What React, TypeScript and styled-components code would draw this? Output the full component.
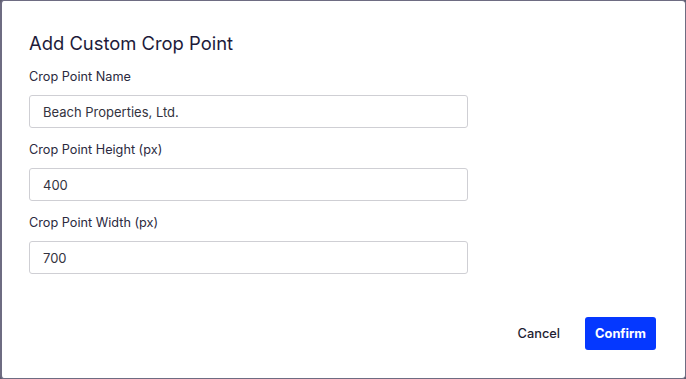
import React from "react";
import styled, { createGlobalStyle } from "styled-components";

const GlobalStyle = createGlobalStyle`
    html, body {
        margin: 0;
        padding: 0;
        background: #5c5b6e;
    }
    * {
        box-sizing: border-box;
    }
`;

const Dialog = styled.div`
    width: 686px;
    height: 379px;
    background: #ffffff;
    border: 1px solid #6e6c82;
    border-left-width: 2px;
    border-radius: 4px;
    font-family: Inter, "Noto Sans", sans-serif;
    display: flex;
    flex-direction: column;
    padding: 30px 29px 28px 27px;
`;

const Title = styled.h2`
    margin: 0 0 14px;
    font-size: 18.4px;
    line-height: 24px;
    font-weight: 400;
    color: #1d1b3a;
`;

const Field = styled.div`
    display: flex;
    flex-direction: column;
    margin-bottom: 14px;
`;

const Label = styled.label`
    font-size: 12.7px;
    line-height: 16px;
    color: #2a2940;
    margin-bottom: 10px;
`;

const Input = styled.input`
    width: 439px;
    height: 33px;
    border: 1px solid #cfcfd4;
    border-radius: 3px;
    padding: 0 13px;
    font-family: inherit;
    font-size: 13px;
    color: #333340;
    outline: none;
`;

const Footer = styled.div`
    margin-top: auto;
    display: flex;
    justify-content: flex-end;
    align-items: center;
    gap: 25px;
`;

const Button = styled.button<{ primary?: boolean }>`
    height: 33px;
    border: none;
    border-radius: 3px;
    font-family: inherit;
    font-size: 12.8px;
    cursor: pointer;
    padding: ${({ primary }) => (primary ? "0 10px" : "0")};
    background: ${({ primary }) => (primary ? "#0538ff" : "transparent")};
    color: ${({ primary }) => (primary ? "#ffffff" : "#1f1e33")};
    font-weight: ${({ primary }) => (primary ? 700 : 500)};
`;

const fields = [
    { label: "Crop Point Name", value: "Beach Properties, Ltd." },
    { label: "Crop Point Height (px)", value: "400" },
    { label: "Crop Point Width (px)", value: "700" },
];

export default function App() {
    return (
        <>
            <GlobalStyle />
            <Dialog>
                <Title>Add Custom Crop Point</Title>
                {fields.map((f) => (
                    <Field key={f.label}>
                        <Label>{f.label}</Label>
                        <Input defaultValue={f.value} />
                    </Field>
                ))}
                <Footer>
                    <Button>Cancel</Button>
                    <Button primary>Confirm</Button>
                </Footer>
            </Dialog>
        </>
    );
}
